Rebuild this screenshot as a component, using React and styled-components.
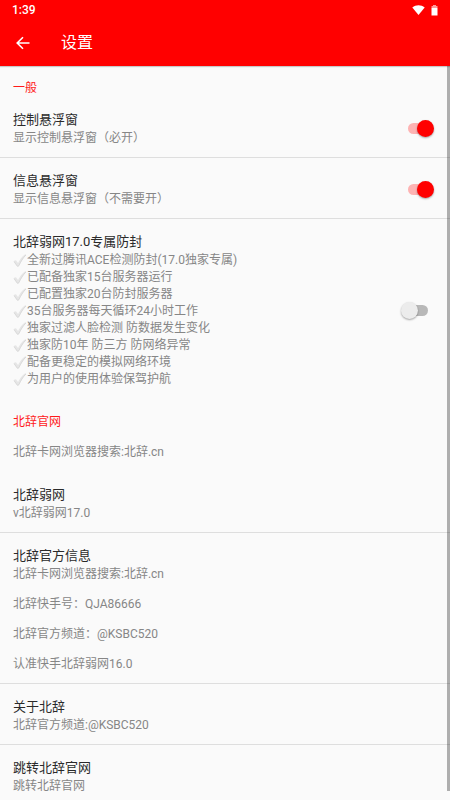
import React, { useState } from 'react';
import styled, { createGlobalStyle } from 'styled-components';

const GlobalStyle = createGlobalStyle`
    * {
        box-sizing: border-box;
    }
    body {
        margin: 0;
        background: #fafafa;
        font-family: Roboto, 'Noto Sans CJK SC', sans-serif;
    }
`;

const Screen = styled.div`
    display: flex;
    flex-direction: column;
    height: 100vh;
    overflow: hidden;
`;

const Header = styled.header`
    flex: none;
    background: #ff0000;
    color: #ffffff;
    z-index: 1;
    box-shadow: 0 1px 1px rgba(0, 0, 0, 0.2);
`;

const StatusBar = styled.div`
    display: flex;
    align-items: center;
    justify-content: space-between;
    height: 20px;
    padding: 0 12px;
    font-size: 12px;
    font-weight: 500;
`;

const StatusIcons = styled.div`
    display: flex;
    align-items: center;
    gap: 6px;
    svg {
        display: block;
    }
`;

const Toolbar = styled.div`
    display: flex;
    align-items: center;
    gap: 28px;
    height: 46px;
    padding: 0 13px;
`;

const BackButton = styled.button`
    display: flex;
    align-items: center;
    justify-content: center;
    width: 20px;
    height: 20px;
    padding: 0;
    border: 0;
    background: none;
    color: inherit;
`;

const PageTitle = styled.h1`
    margin: 0;
    font-size: 16px;
    line-height: 20px;
    font-weight: 400;
`;

const Body = styled.main`
    position: relative;
    flex: 1;
    min-height: 0;
`;

const List = styled.div`
    height: 100%;
    overflow-y: auto;
    scrollbar-width: none;
`;

const ScrollThumb = styled.div`
    position: absolute;
    top: 0;
    right: 0;
    bottom: 9px;
    width: 3px;
    background: rgba(0, 0, 0, 0.3);
`;

const Category = styled.h2`
    margin: 0;
    padding: 14px 13px 1px;
    font-size: 12px;
    line-height: 16px;
    font-weight: 400;
    color: #ff1a1a;
`;

const Item = styled.div`
    display: flex;
    align-items: center;
    justify-content: space-between;
    padding: 13px 16px 11px 13px;
    border-bottom: 1px solid ${props => (props.$divider ? '#dedede' : 'transparent')};
`;

const Title = styled.div`
    font-size: 13px;
    line-height: 20px;
    color: #2a2a2a;
`;

const Summary = styled.div`
    padding-top: 1px;
    font-size: 12px;
    line-height: 15px;
    color: #868686;
    white-space: pre-line;
`;

const CheckList = styled.ul`
    margin: 0;
    padding: 0;
    list-style: none;
    font-size: 12px;
    line-height: 17px;
    color: #868686;
`;

const CheckLine = styled.li`
    display: flex;
    align-items: center;
    svg {
        flex: none;
    }
`;

const Switch = styled.input`
    appearance: none;
    flex: none;
    display: grid;
    align-items: center;
    width: 33px;
    height: 18px;
    margin: 0;
    &::before,
    &::after {
        content: '';
        grid-area: 1 / 1;
    }
    &::before {
        justify-self: center;
        width: 20px;
        height: 11px;
        border-radius: 6px;
        background: #b8b8b8;
    }
    &::after {
        justify-self: start;
        width: 17px;
        height: 17px;
        border-radius: 50%;
        background: #ececec;
        box-shadow: 0 1px 2px rgba(0, 0, 0, 0.35);
    }
    &:checked::before {
        background: #fdb3b3;
    }
    &:checked::after {
        justify-self: end;
        background: #ff0000;
    }
`;

const FEATURES = [
    '全新过腾讯ACE检测防封(17.0独家专属)',
    '已配备独家15台服务器运行',
    '已配置独家20台防封服务器',
    '35台服务器每天循环24小时工作',
    '独家过滤人脸检测 防数据发生变化',
    '独家防10年 防三方 防网络异常',
    '配备更稳定的模拟网络环境',
    '为用户的使用体验保驾护航'
];

const CONTACTS = [
    '北辞卡网浏览器搜索:北辞.cn',
    '北辞快手号：QJA86666',
    '北辞官方频道：@KSBC520',
    '认准快手北辞弱网16.0'
].join('\n\n');

const Check = () => (
    <svg width="14" height="14" viewBox="0 0 14 14" aria-hidden="true">
        <path
            d="M.8 7.500Q2 5.600 3.200 6.600L5 9C7 5.300 9.200 2.300 12 .4Q13.300 0 13 1C10 4.200 7.900 7.600 6 11.800Q5 13.200 4 12z"
            fill="#e6e6e6"
        />
        <path
            d="M1 7.600 4.200 12.100Q5 13 5.900 11.700C7.800 7.600 10 4 12.900 1"
            fill="none"
            stroke="#cccccc"
            strokeWidth="0.6"
        />
    </svg>
);

function SwitchItem ({ title, defaultChecked, divider, children }) {
    const [checked, setChecked] = useState(Boolean(defaultChecked));
    return (
        <Item as="label" $divider={divider}>
            <div>
                <Title>{title}</Title>
                {children}
            </div>
            <Switch
                type="checkbox"
                role="switch"
                checked={checked}
                onChange={e => setChecked(e.target.checked)}
            />
        </Item>
    );
}

function TextItem ({ title, summary, divider }) {
    return (
        <Item $divider={divider}>
            <div>
                {title && <Title>{title}</Title>}
                <Summary>{summary}</Summary>
            </div>
        </Item>
    );
}

export default function App () {
    return (
        <Screen>
            <GlobalStyle />
            <Header>
                <StatusBar>
                    <span>1:39</span>
                    <StatusIcons>
                        <svg width="13" height="10" viewBox="0 0 13 10" aria-hidden="true">
                            <path d="M0.300 2.400C4 -0.500 9 -0.500 12.700 2.400L6.500 10z" fill="#fff" />
                        </svg>
                        <svg width="7" height="11" viewBox="0 0 7 11" aria-hidden="true">
                            <path d="M2 0h3v1h1.500v2h-6V1H2z" fill="#ff9a9a" />
                            <path d="M.5 3h6v7.500h-6z" fill="#fff" />
                        </svg>
                    </StatusIcons>
                </StatusBar>
                <Toolbar>
                    <BackButton type="button" aria-label="返回">
                        <svg width="14" height="14" viewBox="0 0 14 14" aria-hidden="true">
                            <path
                                d="M13.500 7H1.500M7 1.200 1.200 7 7 12.800"
                                fill="none"
                                stroke="#fff"
                                strokeWidth="1.600"
                            />
                        </svg>
                    </BackButton>
                    <PageTitle>设置</PageTitle>
                </Toolbar>
            </Header>
            <Body>
                <List>
                    <Category>一般</Category>
                    <SwitchItem title="控制悬浮窗" defaultChecked divider>
                        <Summary>显示控制悬浮窗（必开）</Summary>
                    </SwitchItem>
                    <SwitchItem title="信息悬浮窗" defaultChecked divider>
                        <Summary>显示信息悬浮窗（不需要开）</Summary>
                    </SwitchItem>
                    <SwitchItem title="北辞弱网17.0专属防封">
                        <CheckList>
                            {FEATURES.map(text => (
                                <CheckLine key={text}>
                                    <Check />
                                    {text}
                                </CheckLine>
                            ))}
                        </CheckList>
                    </SwitchItem>
                    <Category>北辞官网</Category>
                    <TextItem summary="北辞卡网浏览器搜索:北辞.cn" />
                    <TextItem title="北辞弱网" summary="v北辞弱网17.0" divider />
                    <TextItem title="北辞官方信息" summary={CONTACTS} divider />
                    <TextItem title="关于北辞" summary="北辞官方频道:@KSBC520" divider />
                    <TextItem title="跳转北辞官网" summary="跳转北辞官网" divider />
                </List>
                <ScrollThumb />
            </Body>
        </Screen>
    );
}
